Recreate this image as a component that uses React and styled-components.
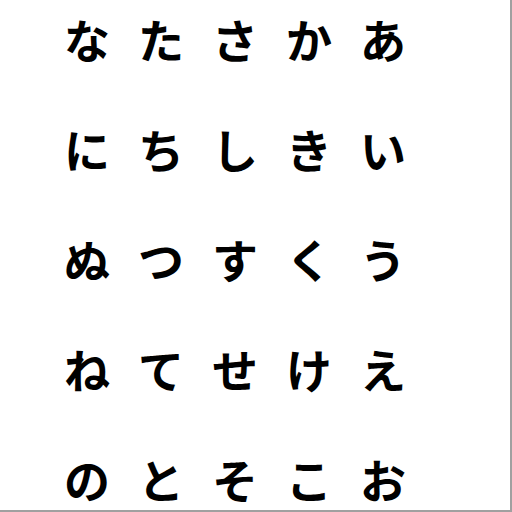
import React from "react";
import styled, { createGlobalStyle } from "styled-components";

const Global = createGlobalStyle`
  html, body { margin: 0; padding: 0; background: #fff; }
  body { font-family: "Noto Sans CJK JP", "Noto Sans", sans-serif; }
`;

const Frame = styled.div`
  box-sizing: border-box;
  width: 512px;
  height: 512px;
  overflow: hidden;
  border-right: 2px solid #a0a0a0;
  border-bottom: 2px solid #a0a0a0;
  background: #fff;
  padding: 10px 0 0 64px;
`;

const Grid = styled.div`
  display: grid;
  grid-template-columns: repeat(5, 74px);
  grid-template-rows: repeat(4, 110px) 56px;
`;

const Kana = styled.span`
  font-size: 46px;
  font-weight: 700;
  line-height: 56px;
  color: #000;
`;

const rows = [
  ["な", "た", "さ", "か", "あ"],
  ["に", "ち", "し", "き", "い"],
  ["ぬ", "つ", "す", "く", "う"],
  ["ね", "て", "せ", "け", "え"],
  ["の", "と", "そ", "こ", "お"],
];

export default function App() {
  return (
    <>
      <Global />
      <Frame>
        <Grid>
          {rows.flat().map((k, i) => (
            <Kana key={i}>{k}</Kana>
          ))}
        </Grid>
      </Frame>
    </>
  );
}
